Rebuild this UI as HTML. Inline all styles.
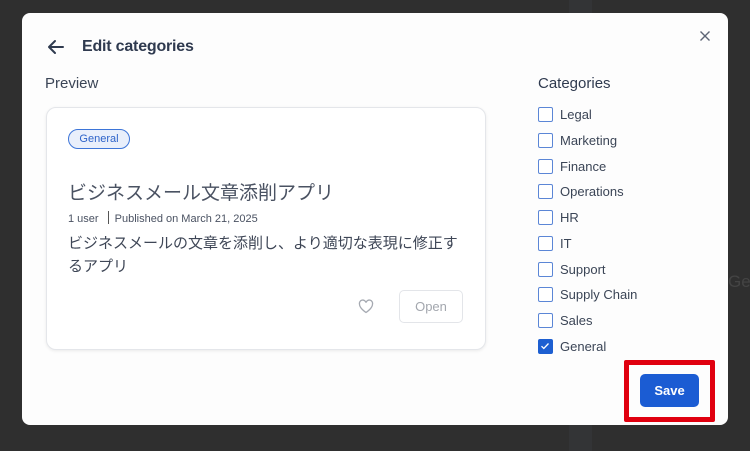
<!DOCTYPE html>
<html><head><meta charset="utf-8"><style>
*{margin:0;padding:0;box-sizing:border-box}
body{width:750px;height:451px;background:#2f2f2f;position:relative;overflow:hidden;font-family:"Liberation Sans","Noto Sans CJK JP",sans-serif;color:#344054}
.strip{position:absolute;left:569px;width:23px;background:#333436}
.modal{position:absolute;left:22px;top:13px;width:706px;height:412px;background:#fdfdfd;border-radius:8px}
.a{position:absolute}
.card{position:absolute;left:46px;top:107px;width:440px;height:243px;border:1px solid #e4e6ea;border-radius:10px;background:#fff;box-shadow:0 1px 3px rgba(0,0,0,.08)}
.cb{position:absolute;left:538px;width:15px;height:15px;border:1.5px solid #5b86d6;border-radius:2px;background:#fff}
.lbl{position:absolute;left:560px;font-size:13px;color:#3b4556}
</style></head><body>
<div class="strip" style="top:0;height:13px"></div>
<div class="strip" style="top:425px;height:26px"></div>
<div class="a" style="left:728px;top:272px;font-size:17px;color:#444">Ge</div>
<div class="modal"></div>
<svg class="a" style="left:46px;top:38px" width="20" height="18" viewBox="0 0 20 18"><path d="M17 9H3M9 3L3 9l6 6" fill="none" stroke="#2f3a4f" stroke-width="2" stroke-linecap="round" stroke-linejoin="round"/></svg>
<div class="a" style="left:82px;top:38px;font-size:16px;font-weight:bold;color:#2f3a4f;letter-spacing:-.2px">Edit categories</div>
<svg class="a" style="left:699px;top:30px" width="12" height="12" viewBox="0 0 12 12"><path d="M1.5 1.5l9 9M10.5 1.5l-9 9" stroke="#5d6575" stroke-width="1.4"/></svg>
<div class="a" style="left:45px;top:75px;font-size:15px;color:#3b4556">Preview</div>
<div class="card"></div>
<div class="a" style="left:68px;top:129px;width:62px;height:20px;border:1px solid #3d75d8;background:#e9effb;border-radius:10px;font-size:11px;color:#2e63c9;text-align:center;line-height:18px">General</div>
<div class="a" style="left:68px;top:178px;font-size:19px;color:#4a5262">ビジネスメール文章添削アプリ</div>
<div class="a" style="left:68px;top:211px;font-size:11px;color:#4a5262">1 user <span style="display:inline-block;width:1px;height:13px;background:#555;vertical-align:-2px;margin:0 6px"></span>Published on March 21, 2025</div>
<div class="a" style="left:68px;top:232px;width:400px;font-size:15px;line-height:23px;color:#3e4656">ビジネスメールの文章を添削し、より適切な表現に修正するアプリ</div>
<svg class="a" style="left:358px;top:299px" width="16" height="15" viewBox="0 0 16 15"><path d="M8 13.5S1.5 9.3 1.5 5.2A3.2 3.2 0 0 1 8 3.6a3.2 3.2 0 0 1 6.5 1.6C14.5 9.3 8 13.5 8 13.5z" fill="none" stroke="#a5a9b1" stroke-width="1.3"/></svg>
<div class="a" style="left:399px;top:290px;width:64px;height:33px;border:1px solid #e3e5e9;border-radius:5px;font-size:13px;color:#a3a7ae;text-align:center;line-height:31px">Open</div>
<div class="a" style="left:538px;top:75px;font-size:15px;color:#2f3a4f">Categories</div>
<div class="cb" style="top:107px"></div><div class="lbl" style="top:107px">Legal</div>
<div class="cb" style="top:133px"></div><div class="lbl" style="top:133px">Marketing</div>
<div class="cb" style="top:159px"></div><div class="lbl" style="top:159px">Finance</div>
<div class="cb" style="top:184px"></div><div class="lbl" style="top:184px">Operations</div>
<div class="cb" style="top:210px"></div><div class="lbl" style="top:210px">HR</div>
<div class="cb" style="top:236px"></div><div class="lbl" style="top:236px">IT</div>
<div class="cb" style="top:262px"></div><div class="lbl" style="top:262px">Support</div>
<div class="cb" style="top:287px"></div><div class="lbl" style="top:287px">Supply Chain</div>
<div class="cb" style="top:313px"></div><div class="lbl" style="top:313px">Sales</div>
<div class="cb" style="top:339px;background:#1d5fd1;border-color:#1d5fd1"><svg width="12" height="12" viewBox="0 0 12 12" style="position:absolute;left:0;top:0"><path d="M2.5 6.2l2.3 2.3 4.7-5" fill="none" stroke="#fff" stroke-width="1.3"/></svg></div><div class="lbl" style="top:339px">General</div>
<div class="a" style="left:624px;top:360px;width:91px;height:62px;border:5px solid #e0000f;border-radius:2px"></div>
<div class="a" style="left:640px;top:374px;width:59px;height:33px;background:#1b5cd3;border-radius:5px;color:#fff;font-size:13px;font-weight:bold;text-align:center;line-height:33px">Save</div>
</body></html>
